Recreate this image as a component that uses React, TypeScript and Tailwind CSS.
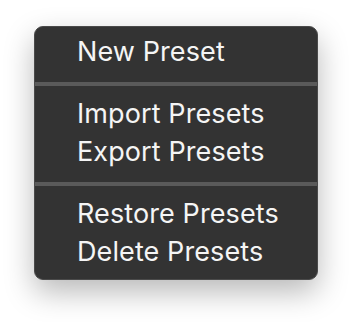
const groups = [
  ['New Preset'],
  ['Import Presets', 'Export Presets'],
  ['Restore Presets', 'Delete Presets'],
];

export default function App() {
  return (
    <div className="flex h-[322px] w-[352px] justify-center bg-white pt-[26px]">
      <div
        className="h-[254px] w-[284px] rounded-[9px] border border-[#4a4a4a] bg-[#333333] pb-[10px] pt-[6px] shadow-[0_12px_30px_rgba(0,0,0,0.28)]"
        style={{ fontFamily: 'Inter, "Noto Sans", sans-serif' }}
      >
        {groups.map((items, gi) => (
          <div key={gi}>
            {gi > 0 && <div className="mb-[9px] mt-[11px] h-[4px] bg-[#5a5a5a]" />}
            {items.map((label) => (
              <div key={label} className="pl-[42px] text-[27px] leading-[38px] tracking-[0.1px] text-[#f5f5f5]">
                {label}
              </div>
            ))}
          </div>
        ))}
      </div>
    </div>
  );
}
